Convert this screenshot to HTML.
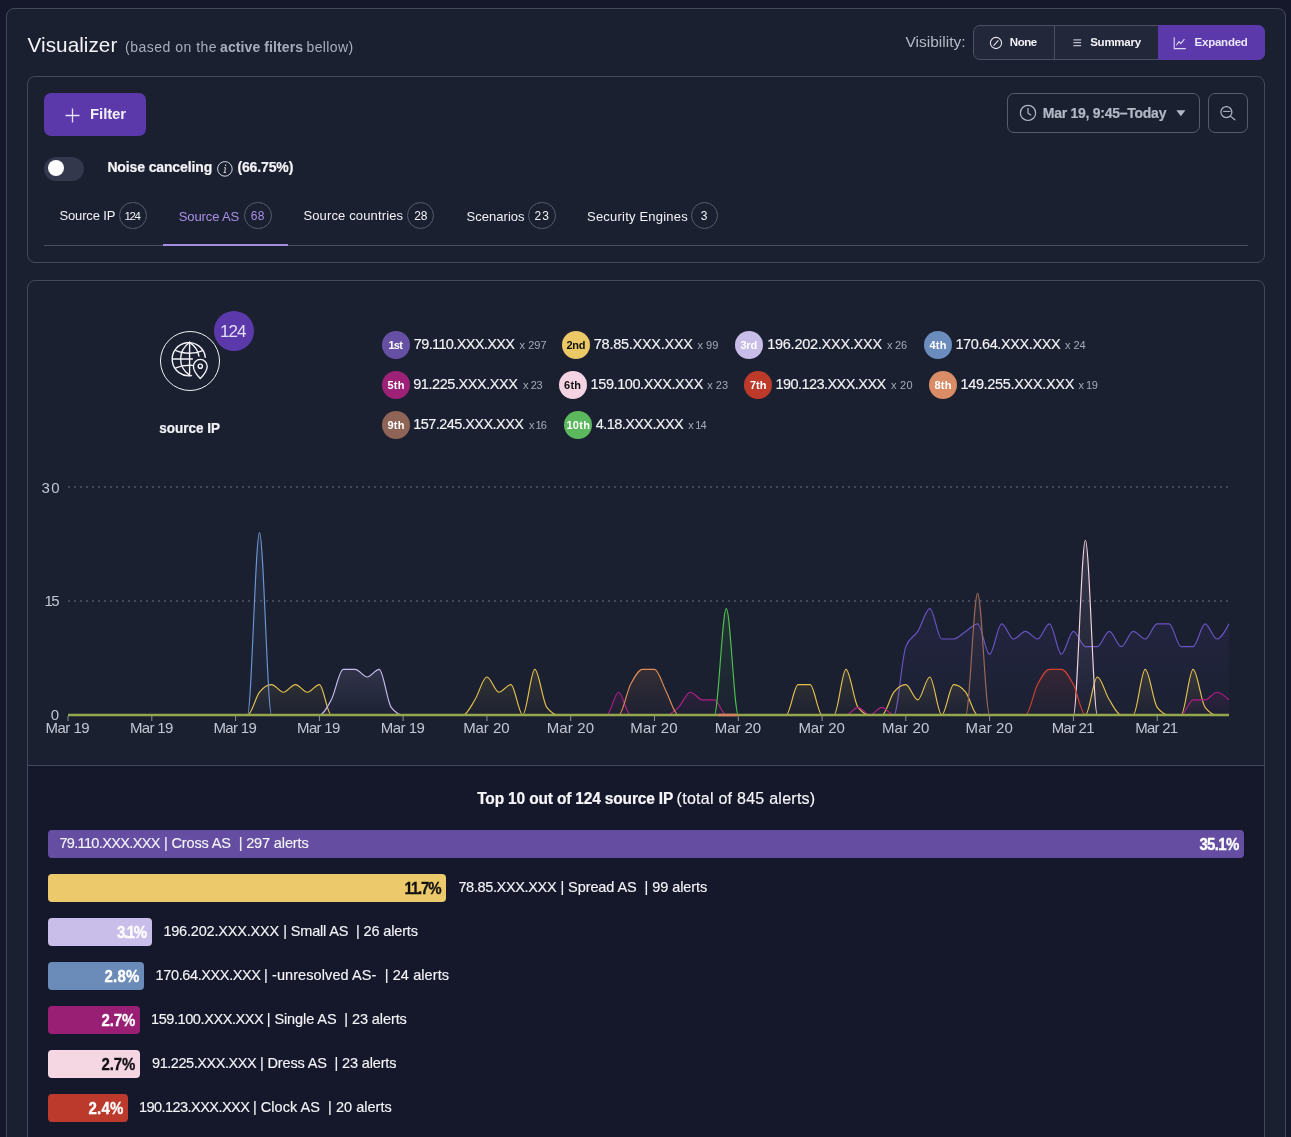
<!DOCTYPE html>
<html lang="en"><head><meta charset="utf-8"><title>Visualizer</title>
<style>

*{box-sizing:border-box;margin:0;padding:0}
html,body{width:1291px;height:1137px;overflow:hidden;background:#15172a;font-family:"Liberation Sans", sans-serif;color:#f1f1f6}
body{position:relative}
#app{position:absolute;left:0;top:0;width:1291px;height:1137px;will-change:transform}
.abs{position:absolute}
.t{position:absolute;white-space:pre;line-height:1;}
.s{-webkit-text-stroke:0.15px currentColor}
.p{transform:scaleY(1.1);-webkit-text-stroke:0.3px currentColor}
.b{transform:scaleY(1.07);-webkit-text-stroke:0.2px currentColor}
.card{position:absolute;border:1px solid #44485c;border-radius:8px;background:#1b2031}
.btn{position:absolute;border:1px solid #565b70;border-radius:7px}
.circ{position:absolute;border-radius:50%}
.bar{position:absolute;left:48px;height:28px;border-radius:4px}

</style></head><body><div id="app">
<main class="card" style="left:6px;top:8px;width:1280px;height:1160px"></main>
<header>
<span class="t" style="left:27.60px;top:35.00px;font-size:20.7px;font-weight:400;color:#f3f3f7;letter-spacing:0.044px">Visualizer</span>
<span class="t" style="left:125.00px;top:40.00px;font-size:14px;font-weight:400;color:#a9adbb;letter-spacing:0.500px">(based on the</span>
<span class="t" style="left:220.00px;top:40.00px;font-size:14px;font-weight:700;color:#a9adbb;letter-spacing:0.100px">active filters</span>
<span class="t" style="left:306.60px;top:40.00px;font-size:14px;font-weight:400;color:#a9adbb;letter-spacing:0.350px">bellow)</span>
<span class="t" style="left:905.40px;top:34.00px;font-size:15.5px;font-weight:400;color:#b5b9c6;letter-spacing:0.020px">Visibility:</span>
<div class="abs" style="left:973px;top:25px;width:292px;height:35px;border:1px solid #4b5064;border-radius:7px;background:#23273a"></div>
<div class="abs" style="left:1054px;top:25px;width:1px;height:35px;background:#4b5064"></div>
<div class="abs" style="left:1158px;top:25px;width:107px;height:35px;background:#5b39ab;border-radius:0 7px 7px 0"></div>
<svg class="abs" style="left:988px;top:35px" width="16" height="16" viewBox="0 0 16 16" fill="none" stroke="#e6e6ee" stroke-width="1.1"><circle cx="8" cy="8" r="5.6"/><path d="M5.9 10.3L10.1 5.7" stroke-linecap="round"/></svg>
<span class="t" style="left:1009.80px;top:37.00px;font-size:11.5px;font-weight:700;color:#f3f3f7;letter-spacing:-0.467px">None</span>
<svg class="abs" style="left:1072px;top:36px" width="11" height="14" viewBox="0 0 11 14" fill="none" stroke="#b9bcc9" stroke-width="1.2"><path d="M1.4 3.8H9.1M1.4 6.7H9.1M1.4 9.6H9.1"/></svg>
<span class="t" style="left:1090.20px;top:37.00px;font-size:11.5px;font-weight:700;color:#f3f3f7;letter-spacing:-0.250px">Summary</span>
<svg class="abs" style="left:1173px;top:36px" width="14" height="14" viewBox="0 0 14 14" fill="none" stroke="#ddd6f3" stroke-width="1.1"><path d="M1.2 1.2V12.6H12.8"/><path d="M3.4 9.2L6 5.6L7.8 7.6L11.4 3.2" stroke-linejoin="round"/></svg>
<span class="t" style="left:1194.60px;top:37.00px;font-size:11.5px;font-weight:700;color:#ebe6f8;letter-spacing:-0.243px">Expanded</span>
</header>
<section class="card" style="left:27px;top:76px;width:1238px;height:187px"></section>
<div class="abs" style="left:44px;top:93px;width:102px;height:43px;background:#5b39ab;border-radius:7px"></div>
<svg class="abs" style="left:64px;top:107px" width="16" height="16" viewBox="0 0 16 16" stroke="#e9e4f7" stroke-width="1.3" fill="none"><path d="M8.5 1.5V15.5M1.5 8.5H15.5"/></svg>
<span class="t" style="left:90.00px;top:106.00px;font-size:15px;font-weight:700;color:#f3f0fb;letter-spacing:-0.100px">Filter</span>
<div class="btn" style="left:1007px;top:93px;width:193px;height:40px"></div>
<svg class="abs" style="left:1019px;top:104px" width="18" height="18" viewBox="0 0 18 18" fill="none" stroke="#b4b8c5" stroke-width="1.2"><circle cx="9" cy="8.9" r="7.6"/><path d="M9 4.4V9.2L11.8 11" stroke-linecap="round" stroke-linejoin="round"/></svg>
<span class="t b" style="left:1042.80px;top:106.00px;font-size:14px;font-weight:700;color:#b4b8c5;letter-spacing:-0.265px;transform-origin:0 12px">Mar 19, 9:45–Today</span>
<svg class="abs" style="left:1176px;top:110px" width="10" height="7" viewBox="0 0 10 7"><path d="M0.4 0.2H9.4L4.9 6.2Z" fill="#b4b8c5"/></svg>
<div class="btn" style="left:1208px;top:93px;width:40px;height:40px"></div>
<svg class="abs" style="left:1218px;top:104px" width="20" height="20" viewBox="0 0 20 20" fill="none" stroke="#b4b8c5" stroke-width="1.2"><circle cx="8.4" cy="8.1" r="5.5"/><path d="M12.4 12.1L16.8 15.8" stroke-linecap="round"/><path d="M5.2 7.4H12.6" stroke-width="1"/></svg>
<div class="abs" style="left:44px;top:157px;width:40px;height:24px;border-radius:12px;background:#34384c"></div>
<div class="circ" style="left:48px;top:160px;width:16px;height:16px;background:#fff"></div>
<span class="t b" style="left:107.40px;top:160.00px;font-size:14px;font-weight:700;color:#f3f3f7;letter-spacing:-0.129px;transform-origin:0 12px">Noise canceling</span>
<svg class="abs" style="left:216px;top:160px" width="18" height="18" viewBox="0 0 18 18" fill="none" stroke="#d5d7e0" stroke-width="1"><circle cx="8.9" cy="8.9" r="7.3"/><path d="M8.2 7.7H9.5L8.7 12.3M7.6 12.4H10" stroke-width="1"/><circle cx="9.6" cy="5.3" r="0.75" fill="#d5d7e0" stroke="none"/></svg>
<span class="t b" style="left:237.40px;top:160.00px;font-size:14px;font-weight:700;color:#f3f3f7;letter-spacing:-0.129px;transform-origin:0 12px">(66.75%)</span>
<nav><div class="abs" style="left:44px;top:245px;width:1204px;height:1px;background:#4a4e62"></div>
<div class="abs" style="left:163px;top:244px;width:125px;height:2px;background:#a48de0"></div>
<span class="t" style="left:59.40px;top:209.00px;font-size:13px;font-weight:400;color:#f1f1f6;letter-spacing:-0.125px">Source IP</span>
<div class="circ" style="left:119.1px;top:201.7px;width:27.6px;height:27.6px;border:1px solid #565b70"></div>
<span class="t" style="left:124.60px;top:211.00px;font-size:11.5px;font-weight:400;color:#f1f1f6;letter-spacing:-1.400px">124</span>
<span class="t" style="left:178.80px;top:210.00px;font-size:13px;font-weight:400;color:#a790e6;letter-spacing:-0.125px">Source AS</span>
<div class="circ" style="left:244.2px;top:201.7px;width:27.6px;height:27.6px;border:1px solid #565b70"></div>
<span class="t" style="left:250.80px;top:210.00px;font-size:12px;font-weight:400;color:#a790e6;letter-spacing:0.200px">68</span>
<span class="t" style="left:303.40px;top:209.00px;font-size:13px;font-weight:400;color:#f1f1f6;letter-spacing:0.140px">Source countries</span>
<div class="circ" style="left:406.8px;top:201.7px;width:27.6px;height:27.6px;border:1px solid #565b70"></div>
<span class="t" style="left:414.20px;top:210.00px;font-size:12px;font-weight:400;color:#f1f1f6;letter-spacing:0.000px">28</span>
<span class="t" style="left:466.60px;top:210.00px;font-size:13px;font-weight:400;color:#f1f1f6;letter-spacing:0.025px">Scenarios</span>
<div class="circ" style="left:528.0px;top:201.7px;width:27.6px;height:27.6px;border:1px solid #565b70"></div>
<span class="t" style="left:534.60px;top:210.00px;font-size:12px;font-weight:400;color:#f1f1f6;letter-spacing:1.000px">23</span>
<span class="t" style="left:587.00px;top:210.00px;font-size:13px;font-weight:400;color:#f1f1f6;letter-spacing:0.213px">Security Engines</span>
<div class="circ" style="left:690.8px;top:201.7px;width:27.6px;height:27.6px;border:1px solid #565b70"></div>
<span class="t" style="left:700.80px;top:210.00px;font-size:12px;font-weight:400;color:#f1f1f6;letter-spacing:0.000px">3</span>
</nav>
<section class="card" style="left:27px;top:280px;width:1238px;height:900px;overflow:hidden"><div class="abs" style="left:0;top:484px;width:1238px;height:500px;background:#15182a;border-top:1px solid #44485c"></div></section>
<div class="circ" style="left:160px;top:331px;width:60px;height:60px;border:1.2px solid #f0f0f5"></div>
<svg class="abs" style="left:170px;top:339px" width="42" height="42" viewBox="0 0 42 42" fill="none" stroke="#f3f3f7" stroke-width="1.4" stroke-linecap="round">
<path d="M21.5 36.6A16.6 16.6 0 1 1 35.3 18.4"/>
<path d="M19.6 3.3V36.4"/>
<path d="M19.6 3.3C13.6 7.8 10.6 13.4 10.6 20C10.6 26.6 13.6 32 19.6 36.4"/>
<path d="M19.6 3.3C25 7 28.2 11.6 28.9 17"/>
<path d="M3 20H22.4"/>
<path d="M5.6 11.4C9.6 13.3 14.2 14.2 19.6 14.2C24.2 14.2 28.6 13.4 32.6 11.6"/>
<path d="M5.8 28.8C9.6 27.2 14 26.3 19.6 26.3C20.6 26.3 21.6 26.3 22.6 26.4"/>
<path d="M30.3 39.6C26.2 35.4 23.4 31.4 23.4 27.3A6.9 6.9 0 0 1 37.2 27.3C37.2 31.4 34.4 35.4 30.3 39.6Z" stroke-linejoin="round"/>
<circle cx="30.3" cy="27.2" r="2.1"/>
</svg>
<div class="circ" style="left:214px;top:311px;width:40px;height:40px;background:#5b39ab"></div>
<span class="t" style="left:220.00px;top:323.00px;font-size:17px;font-weight:400;color:#e4def6;letter-spacing:-1.000px">124</span>
<span class="t b" style="left:159.20px;top:422.00px;font-size:13.5px;font-weight:700;color:#f3f3f7;letter-spacing:0.013px;transform-origin:0 11px">source IP</span>
<ul style="list-style:none">
<li><div class="circ" style="left:382px;top:331px;width:28px;height:28px;background:#6650a4"></div>
<span class="t" style="left:388.50px;top:340.00px;font-size:11px;font-weight:700;color:#fff;letter-spacing:-0.750px">1st</span>
<span class="t s" style="left:413.80px;top:337.00px;font-size:14.5px;font-weight:400;color:#f3f3f7;letter-spacing:-0.631px">79.110.XXX.XXX</span>
<span class="t" style="left:519.60px;top:340.00px;font-size:11px;font-weight:400;color:#a5a9b8;letter-spacing:0.000px">x 297</span>
</li>
<li><div class="circ" style="left:562px;top:331px;width:28px;height:28px;background:#ecc866"></div>
<span class="t" style="left:566.50px;top:340.00px;font-size:11px;font-weight:700;color:#111;letter-spacing:-0.250px">2nd</span>
<span class="t s" style="left:593.80px;top:337.00px;font-size:14.5px;font-weight:400;color:#f3f3f7;letter-spacing:-0.267px">78.85.XXX.XXX</span>
<span class="t" style="left:697.60px;top:340.00px;font-size:11px;font-weight:400;color:#a5a9b8;letter-spacing:-0.033px">x 99</span>
</li>
<li><div class="circ" style="left:735px;top:331px;width:28px;height:28px;background:#c8bce8"></div>
<span class="t" style="left:740.50px;top:340.00px;font-size:11px;font-weight:700;color:#fff;letter-spacing:-0.250px">3rd</span>
<span class="t s" style="left:767.20px;top:337.00px;font-size:14.5px;font-weight:400;color:#f3f3f7;letter-spacing:-0.257px">196.202.XXX.XXX</span>
<span class="t" style="left:887.00px;top:340.00px;font-size:11px;font-weight:400;color:#a5a9b8;letter-spacing:-0.233px">x 26</span>
</li>
<li><div class="circ" style="left:924px;top:331px;width:28px;height:28px;background:#6b8dbd"></div>
<span class="t" style="left:929.50px;top:340.00px;font-size:11px;font-weight:700;color:#fff;letter-spacing:0.250px">4th</span>
<span class="t s" style="left:955.40px;top:337.00px;font-size:14.5px;font-weight:400;color:#f3f3f7;letter-spacing:-0.400px">170.64.XXX.XXX</span>
<span class="t" style="left:1065.00px;top:340.00px;font-size:11px;font-weight:400;color:#a5a9b8;letter-spacing:-0.067px">x 24</span>
</li>
<li><div class="circ" style="left:382px;top:371px;width:28px;height:28px;background:#9c2177"></div>
<span class="t" style="left:387.50px;top:380.00px;font-size:11px;font-weight:700;color:#fff;letter-spacing:0.250px">5th</span>
<span class="t s" style="left:413.20px;top:377.00px;font-size:14.5px;font-weight:400;color:#f3f3f7;letter-spacing:-0.438px">91.225.XXX.XXX</span>
<span class="t" style="left:523.00px;top:380.00px;font-size:11px;font-weight:400;color:#a5a9b8;letter-spacing:-0.400px">x 23</span>
</li>
<li><div class="circ" style="left:558.8px;top:371px;width:28px;height:28px;background:#f4d4e2"></div>
<span class="t" style="left:564.10px;top:380.00px;font-size:11px;font-weight:700;color:#111;letter-spacing:0.250px">6th</span>
<span class="t s" style="left:590.60px;top:377.00px;font-size:14.5px;font-weight:400;color:#f3f3f7;letter-spacing:-0.414px">159.100.XXX.XXX</span>
<span class="t" style="left:707.20px;top:380.00px;font-size:11px;font-weight:400;color:#a5a9b8;letter-spacing:0.033px">x 23</span>
</li>
<li><div class="circ" style="left:744px;top:371px;width:28px;height:28px;background:#bd3a2b"></div>
<span class="t" style="left:750.00px;top:380.00px;font-size:11px;font-weight:700;color:#fff;letter-spacing:0.000px">7th</span>
<span class="t s" style="left:775.40px;top:377.00px;font-size:14.5px;font-weight:400;color:#f3f3f7;letter-spacing:-0.550px">190.123.XXX.XXX</span>
<span class="t" style="left:891.00px;top:380.00px;font-size:11px;font-weight:400;color:#a5a9b8;letter-spacing:0.267px">x 20</span>
</li>
<li><div class="circ" style="left:928.5px;top:371px;width:28px;height:28px;background:#d98c66"></div>
<span class="t" style="left:934.50px;top:380.00px;font-size:11px;font-weight:700;color:#fff;letter-spacing:0.250px">8th</span>
<span class="t s" style="left:960.40px;top:377.00px;font-size:14.5px;font-weight:400;color:#f3f3f7;letter-spacing:-0.321px">149.255.XXX.XXX</span>
<span class="t" style="left:1078.40px;top:380.00px;font-size:11px;font-weight:400;color:#a5a9b8;letter-spacing:-0.433px">x 19</span>
</li>
<li><div class="circ" style="left:382px;top:411px;width:28px;height:28px;background:#8e6456"></div>
<span class="t" style="left:387.50px;top:420.00px;font-size:11px;font-weight:700;color:#fff;letter-spacing:0.250px">9th</span>
<span class="t s" style="left:413.20px;top:417.00px;font-size:14.5px;font-weight:400;color:#f3f3f7;letter-spacing:-0.550px">157.245.XXX.XXX</span>
<span class="t" style="left:529.00px;top:420.00px;font-size:11px;font-weight:400;color:#a5a9b8;letter-spacing:-0.967px">x 16</span>
</li>
<li><div class="circ" style="left:564.2px;top:411px;width:28px;height:28px;background:#5cb85c"></div>
<span class="t" style="left:566.40px;top:420.00px;font-size:11px;font-weight:700;color:#fff;letter-spacing:0.333px">10th</span>
<span class="t s" style="left:595.80px;top:417.00px;font-size:14.5px;font-weight:400;color:#f3f3f7;letter-spacing:-0.582px">4.18.XXX.XXX</span>
<span class="t" style="left:688.20px;top:420.00px;font-size:11px;font-weight:400;color:#a5a9b8;letter-spacing:-0.767px">x 14</span>
</li>
</ul>
<svg class="chart" width="1291" height="300" viewBox="0 470 1291 300" style="position:absolute;left:0;top:470px">
<defs>
<linearGradient id="g0" x1="0" y1="0" x2="0" y2="1"><stop offset="0" stop-color="#6a53c4" stop-opacity="0.1"/><stop offset="1" stop-color="#6a53c4" stop-opacity="0.01"/></linearGradient>
<linearGradient id="g1" x1="0" y1="0" x2="0" y2="1"><stop offset="0" stop-color="#e6c24d" stop-opacity="0.13"/><stop offset="1" stop-color="#e6c24d" stop-opacity="0.01"/></linearGradient>
<linearGradient id="g2" x1="0" y1="0" x2="0" y2="1"><stop offset="0" stop-color="#c7bbee" stop-opacity="0.13"/><stop offset="1" stop-color="#c7bbee" stop-opacity="0.01"/></linearGradient>
<linearGradient id="g3" x1="0" y1="0" x2="0" y2="1"><stop offset="0" stop-color="#6b95cf" stop-opacity="0.13"/><stop offset="1" stop-color="#6b95cf" stop-opacity="0.01"/></linearGradient>
<linearGradient id="g4" x1="0" y1="0" x2="0" y2="1"><stop offset="0" stop-color="#b01f86" stop-opacity="0.13"/><stop offset="1" stop-color="#b01f86" stop-opacity="0.01"/></linearGradient>
<linearGradient id="g5" x1="0" y1="0" x2="0" y2="1"><stop offset="0" stop-color="#f2d3e0" stop-opacity="0.13"/><stop offset="1" stop-color="#f2d3e0" stop-opacity="0.01"/></linearGradient>
<linearGradient id="g6" x1="0" y1="0" x2="0" y2="1"><stop offset="0" stop-color="#d2402c" stop-opacity="0.13"/><stop offset="1" stop-color="#d2402c" stop-opacity="0.01"/></linearGradient>
<linearGradient id="g7" x1="0" y1="0" x2="0" y2="1"><stop offset="0" stop-color="#e08a55" stop-opacity="0.13"/><stop offset="1" stop-color="#e08a55" stop-opacity="0.01"/></linearGradient>
<linearGradient id="g8" x1="0" y1="0" x2="0" y2="1"><stop offset="0" stop-color="#9a6a58" stop-opacity="0.13"/><stop offset="1" stop-color="#9a6a58" stop-opacity="0.01"/></linearGradient>
<linearGradient id="g9" x1="0" y1="0" x2="0" y2="1"><stop offset="0" stop-color="#4fc14f" stop-opacity="0.13"/><stop offset="1" stop-color="#4fc14f" stop-opacity="0.01"/></linearGradient>
</defs>
<line x1="68.0" x2="1229.0" y1="601.0" y2="601.0" stroke="#42475a" stroke-width="2" stroke-dasharray="2 4"/>
<line x1="68.0" x2="1229.0" y1="487.0" y2="487.0" stroke="#42475a" stroke-width="2" stroke-dasharray="2 4"/>
<path d="M893.9,715.0C897.9,715.0 901.8,656.7 905.8,646.6C909.8,636.5 913.8,637.7 917.8,631.4C921.8,625.1 925.8,608.6 929.8,608.6C933.8,608.6 937.8,639.0 941.7,639.0C945.7,639.0 949.7,639.0 953.7,639.0C957.7,639.0 961.7,633.9 965.7,631.4C969.7,628.9 973.7,623.8 977.6,623.8C981.6,623.8 985.6,654.2 989.6,654.2C993.6,654.2 997.6,623.8 1001.6,623.8C1005.6,623.8 1009.6,639.0 1013.6,639.0C1017.5,639.0 1021.5,631.4 1025.5,631.4C1029.5,631.4 1033.5,639.0 1037.5,639.0C1041.5,639.0 1045.5,623.8 1049.5,623.8C1053.5,623.8 1057.4,654.2 1061.4,654.2C1065.4,654.2 1069.4,631.4 1073.4,631.4C1077.4,631.4 1081.4,646.6 1085.4,646.6C1089.4,646.6 1093.4,646.6 1097.3,646.6C1101.3,646.6 1105.3,631.4 1109.3,631.4C1113.3,631.4 1117.3,646.6 1121.3,646.6C1125.3,646.6 1129.3,631.4 1133.2,631.4C1137.2,631.4 1141.2,639.0 1145.2,639.0C1149.2,639.0 1153.2,623.8 1157.2,623.8C1161.2,623.8 1165.2,623.8 1169.2,623.8C1173.1,623.8 1177.1,646.6 1181.1,646.6C1185.1,646.6 1189.1,646.6 1193.1,646.6C1197.1,646.6 1201.1,623.8 1205.1,623.8C1209.1,623.8 1213.0,639.0 1217.0,639.0C1221.0,639.0 1225.0,631.4 1229.0,623.8L1229.0,715.0L893.9,715.0Z" fill="url(#g0)" stroke="none"/>
<path d="M893.9,715.0C897.9,715.0 901.8,656.7 905.8,646.6C909.8,636.5 913.8,637.7 917.8,631.4C921.8,625.1 925.8,608.6 929.8,608.6C933.8,608.6 937.8,639.0 941.7,639.0C945.7,639.0 949.7,639.0 953.7,639.0C957.7,639.0 961.7,633.9 965.7,631.4C969.7,628.9 973.7,623.8 977.6,623.8C981.6,623.8 985.6,654.2 989.6,654.2C993.6,654.2 997.6,623.8 1001.6,623.8C1005.6,623.8 1009.6,639.0 1013.6,639.0C1017.5,639.0 1021.5,631.4 1025.5,631.4C1029.5,631.4 1033.5,639.0 1037.5,639.0C1041.5,639.0 1045.5,623.8 1049.5,623.8C1053.5,623.8 1057.4,654.2 1061.4,654.2C1065.4,654.2 1069.4,631.4 1073.4,631.4C1077.4,631.4 1081.4,646.6 1085.4,646.6C1089.4,646.6 1093.4,646.6 1097.3,646.6C1101.3,646.6 1105.3,631.4 1109.3,631.4C1113.3,631.4 1117.3,646.6 1121.3,646.6C1125.3,646.6 1129.3,631.4 1133.2,631.4C1137.2,631.4 1141.2,639.0 1145.2,639.0C1149.2,639.0 1153.2,623.8 1157.2,623.8C1161.2,623.8 1165.2,623.8 1169.2,623.8C1173.1,623.8 1177.1,646.6 1181.1,646.6C1185.1,646.6 1189.1,646.6 1193.1,646.6C1197.1,646.6 1201.1,623.8 1205.1,623.8C1209.1,623.8 1213.0,639.0 1217.0,639.0C1221.0,639.0 1225.0,631.4 1229.0,623.8" fill="none" stroke="#6a53c4" stroke-width="1.15"/>
<path d="M247.5,715.0C251.5,715.0 255.5,697.3 259.5,692.2C263.5,687.1 267.5,684.6 271.5,684.6C275.5,684.6 279.5,692.2 283.4,692.2C287.4,692.2 291.4,684.6 295.4,684.6C299.4,684.6 303.4,692.2 307.4,692.2C311.4,692.2 315.4,684.6 319.4,684.6C323.3,684.6 327.3,715.0 331.3,715.0L331.3,715.0L247.5,715.0ZM463.0,715.0C467.0,715.0 471.0,706.1 474.9,699.8C478.9,693.5 482.9,677.0 486.9,677.0C490.9,677.0 494.9,692.2 498.9,692.2C502.9,692.2 506.9,684.6 510.9,684.6C514.8,684.6 518.8,715.0 522.8,715.0L522.8,715.0L463.0,715.0ZM522.8,715.0C526.8,715.0 530.8,669.4 534.8,669.4C538.8,669.4 542.8,702.3 546.8,707.4C550.8,712.5 554.7,715.0 558.7,715.0L558.7,715.0L522.8,715.0ZM786.1,715.0C790.1,715.0 794.1,684.6 798.1,684.6C802.1,684.6 806.1,684.6 810.1,684.6C814.1,684.6 818.1,715.0 822.1,715.0L822.1,715.0L786.1,715.0ZM834.0,715.0C838.0,715.0 842.0,669.4 846.0,669.4C850.0,669.4 854.0,702.3 858.0,707.4C861.9,712.5 865.9,715.0 869.9,715.0L869.9,715.0L834.0,715.0ZM881.9,715.0C885.9,715.0 889.9,697.3 893.9,692.2C897.9,687.1 901.8,684.6 905.8,684.6C909.8,684.6 913.8,699.8 917.8,699.8C921.8,699.8 925.8,677.0 929.8,677.0C933.8,677.0 937.8,715.0 941.7,715.0L941.7,715.0L881.9,715.0ZM941.7,715.0C945.7,715.0 949.7,684.6 953.7,684.6C957.7,684.6 961.7,687.1 965.7,692.2C969.7,697.3 973.7,715.0 977.6,715.0L977.6,715.0L941.7,715.0ZM1085.4,715.0C1089.4,715.0 1093.4,677.0 1097.3,677.0C1101.3,677.0 1105.3,693.5 1109.3,699.8C1113.3,706.1 1117.3,715.0 1121.3,715.0L1121.3,715.0L1085.4,715.0ZM1133.2,715.0C1137.2,715.0 1141.2,669.4 1145.2,669.4C1149.2,669.4 1153.2,702.3 1157.2,707.4C1161.2,712.5 1165.2,715.0 1169.2,715.0L1169.2,715.0L1133.2,715.0ZM1181.1,715.0C1185.1,715.0 1189.1,669.4 1193.1,669.4C1197.1,669.4 1201.1,702.3 1205.1,707.4C1209.1,712.5 1213.0,715.0 1217.0,715.0L1217.0,715.0L1181.1,715.0Z" fill="url(#g1)" stroke="none"/>
<path d="M247.5,715.0C251.5,715.0 255.5,697.3 259.5,692.2C263.5,687.1 267.5,684.6 271.5,684.6C275.5,684.6 279.5,692.2 283.4,692.2C287.4,692.2 291.4,684.6 295.4,684.6C299.4,684.6 303.4,692.2 307.4,692.2C311.4,692.2 315.4,684.6 319.4,684.6C323.3,684.6 327.3,715.0 331.3,715.0M463.0,715.0C467.0,715.0 471.0,706.1 474.9,699.8C478.9,693.5 482.9,677.0 486.9,677.0C490.9,677.0 494.9,692.2 498.9,692.2C502.9,692.2 506.9,684.6 510.9,684.6C514.8,684.6 518.8,715.0 522.8,715.0M522.8,715.0C526.8,715.0 530.8,669.4 534.8,669.4C538.8,669.4 542.8,702.3 546.8,707.4C550.8,712.5 554.7,715.0 558.7,715.0M786.1,715.0C790.1,715.0 794.1,684.6 798.1,684.6C802.1,684.6 806.1,684.6 810.1,684.6C814.1,684.6 818.1,715.0 822.1,715.0M834.0,715.0C838.0,715.0 842.0,669.4 846.0,669.4C850.0,669.4 854.0,702.3 858.0,707.4C861.9,712.5 865.9,715.0 869.9,715.0M881.9,715.0C885.9,715.0 889.9,697.3 893.9,692.2C897.9,687.1 901.8,684.6 905.8,684.6C909.8,684.6 913.8,699.8 917.8,699.8C921.8,699.8 925.8,677.0 929.8,677.0C933.8,677.0 937.8,715.0 941.7,715.0M941.7,715.0C945.7,715.0 949.7,684.6 953.7,684.6C957.7,684.6 961.7,687.1 965.7,692.2C969.7,697.3 973.7,715.0 977.6,715.0M1085.4,715.0C1089.4,715.0 1093.4,677.0 1097.3,677.0C1101.3,677.0 1105.3,693.5 1109.3,699.8C1113.3,706.1 1117.3,715.0 1121.3,715.0M1133.2,715.0C1137.2,715.0 1141.2,669.4 1145.2,669.4C1149.2,669.4 1153.2,702.3 1157.2,707.4C1161.2,712.5 1165.2,715.0 1169.2,715.0M1181.1,715.0C1185.1,715.0 1189.1,669.4 1193.1,669.4C1197.1,669.4 1201.1,702.3 1205.1,707.4C1209.1,712.5 1213.0,715.0 1217.0,715.0" fill="none" stroke="#e6c24d" stroke-width="1.15"/>
<path d="M319.4,715.0C323.3,715.0 327.3,707.4 331.3,699.8C335.3,692.2 339.3,669.4 343.3,669.4C347.3,669.4 351.3,669.4 355.3,669.4C359.2,669.4 363.2,677.0 367.2,677.0C371.2,677.0 375.2,669.4 379.2,669.4C383.2,669.4 387.2,702.3 391.2,707.4C395.2,712.5 399.1,715.0 403.1,715.0L403.1,715.0L319.4,715.0Z" fill="url(#g2)" stroke="none"/>
<path d="M319.4,715.0C323.3,715.0 327.3,707.4 331.3,699.8C335.3,692.2 339.3,669.4 343.3,669.4C347.3,669.4 351.3,669.4 355.3,669.4C359.2,669.4 363.2,677.0 367.2,677.0C371.2,677.0 375.2,669.4 379.2,669.4C383.2,669.4 387.2,702.3 391.2,707.4C395.2,712.5 399.1,715.0 403.1,715.0" fill="none" stroke="#c7bbee" stroke-width="1.15"/>
<path d="M247.5,715.0C251.5,715.0 255.5,532.6 259.5,532.6C263.5,532.6 267.5,715.0 271.5,715.0L271.5,715.0L247.5,715.0Z" fill="url(#g3)" stroke="none"/>
<path d="M247.5,715.0C251.5,715.0 255.5,532.6 259.5,532.6C263.5,532.6 267.5,715.0 271.5,715.0" fill="none" stroke="#6b95cf" stroke-width="1.15"/>
<path d="M606.6,715.0C610.6,715.0 614.6,692.2 618.6,692.2C622.6,692.2 626.6,715.0 630.5,715.0L630.5,715.0L606.6,715.0ZM666.5,715.0C670.4,715.0 674.4,711.2 678.4,707.4C682.4,703.6 686.4,692.2 690.4,692.2C694.4,692.2 698.4,699.8 702.4,699.8C706.4,699.8 710.3,699.8 714.3,699.8C718.3,699.8 722.3,715.0 726.3,715.0L726.3,715.0L666.5,715.0ZM846.0,715.0C850.0,715.0 854.0,707.4 858.0,707.4C861.9,707.4 865.9,715.0 869.9,715.0L869.9,715.0L846.0,715.0ZM869.9,715.0C873.9,715.0 877.9,707.4 881.9,707.4C885.9,707.4 889.9,715.0 893.9,715.0L893.9,715.0L869.9,715.0ZM1181.1,715.0C1185.1,715.0 1189.1,699.8 1193.1,699.8C1197.1,699.8 1201.1,699.8 1205.1,699.8C1209.1,699.8 1213.0,692.2 1217.0,692.2C1221.0,692.2 1225.0,696.0 1229.0,699.8L1229.0,715.0L1181.1,715.0Z" fill="url(#g4)" stroke="none"/>
<path d="M606.6,715.0C610.6,715.0 614.6,692.2 618.6,692.2C622.6,692.2 626.6,715.0 630.5,715.0M666.5,715.0C670.4,715.0 674.4,711.2 678.4,707.4C682.4,703.6 686.4,692.2 690.4,692.2C694.4,692.2 698.4,699.8 702.4,699.8C706.4,699.8 710.3,699.8 714.3,699.8C718.3,699.8 722.3,715.0 726.3,715.0M846.0,715.0C850.0,715.0 854.0,707.4 858.0,707.4C861.9,707.4 865.9,715.0 869.9,715.0M869.9,715.0C873.9,715.0 877.9,707.4 881.9,707.4C885.9,707.4 889.9,715.0 893.9,715.0M1181.1,715.0C1185.1,715.0 1189.1,699.8 1193.1,699.8C1197.1,699.8 1201.1,699.8 1205.1,699.8C1209.1,699.8 1213.0,692.2 1217.0,692.2C1221.0,692.2 1225.0,696.0 1229.0,699.8" fill="none" stroke="#b01f86" stroke-width="1.15"/>
<path d="M1073.4,715.0C1077.4,715.0 1081.4,540.2 1085.4,540.2C1089.4,540.2 1093.4,715.0 1097.3,715.0L1097.3,715.0L1073.4,715.0Z" fill="url(#g5)" stroke="none"/>
<path d="M1073.4,715.0C1077.4,715.0 1081.4,540.2 1085.4,540.2C1089.4,540.2 1093.4,715.0 1097.3,715.0" fill="none" stroke="#f2d3e0" stroke-width="1.15"/>
<path d="M1025.5,715.0C1029.5,715.0 1033.5,692.2 1037.5,684.6C1041.5,677.0 1045.5,669.4 1049.5,669.4C1053.5,669.4 1057.4,669.4 1061.4,669.4C1065.4,669.4 1069.4,677.0 1073.4,684.6C1077.4,692.2 1081.4,715.0 1085.4,715.0L1085.4,715.0L1025.5,715.0Z" fill="url(#g6)" stroke="none"/>
<path d="M1025.5,715.0C1029.5,715.0 1033.5,692.2 1037.5,684.6C1041.5,677.0 1045.5,669.4 1049.5,669.4C1053.5,669.4 1057.4,669.4 1061.4,669.4C1065.4,669.4 1069.4,677.0 1073.4,684.6C1077.4,692.2 1081.4,715.0 1085.4,715.0" fill="none" stroke="#d2402c" stroke-width="1.15"/>
<path d="M618.6,715.0C622.6,715.0 626.6,692.2 630.5,684.6C634.5,677.0 638.5,669.4 642.5,669.4C646.5,669.4 650.5,669.4 654.5,669.4C658.5,669.4 662.5,684.6 666.5,692.2C670.4,699.8 674.4,715.0 678.4,715.0L678.4,715.0L618.6,715.0Z" fill="url(#g7)" stroke="none"/>
<path d="M618.6,715.0C622.6,715.0 626.6,692.2 630.5,684.6C634.5,677.0 638.5,669.4 642.5,669.4C646.5,669.4 650.5,669.4 654.5,669.4C658.5,669.4 662.5,684.6 666.5,692.2C670.4,699.8 674.4,715.0 678.4,715.0" fill="none" stroke="#e08a55" stroke-width="1.15"/>
<path d="M965.7,715.0C969.7,715.0 973.7,593.4 977.6,593.4C981.6,593.4 985.6,715.0 989.6,715.0L989.6,715.0L965.7,715.0Z" fill="url(#g8)" stroke="none"/>
<path d="M965.7,715.0C969.7,715.0 973.7,593.4 977.6,593.4C981.6,593.4 985.6,715.0 989.6,715.0" fill="none" stroke="#9a6a58" stroke-width="1.15"/>
<path d="M714.3,715.0C718.3,715.0 722.3,608.6 726.3,608.6C730.3,608.6 734.3,715.0 738.3,715.0L738.3,715.0L714.3,715.0Z" fill="url(#g9)" stroke="none"/>
<path d="M714.3,715.0C718.3,715.0 722.3,608.6 726.3,608.6C730.3,608.6 734.3,715.0 738.3,715.0" fill="none" stroke="#4fc14f" stroke-width="1.15"/>
<line x1="68.0" x2="1229.0" y1="715.0" y2="715.0" stroke="#95a64c" stroke-width="2.4"/>
<line x1="718.3" x2="737.3" y1="715.0" y2="715.0" stroke="#dd8060" stroke-width="2.4"/>
<line x1="68.0" x2="68.0" y1="716.0" y2="721.0" stroke="#8b8fa0" stroke-width="1"/>
<line x1="151.8" x2="151.8" y1="716.0" y2="721.0" stroke="#8b8fa0" stroke-width="1"/>
<line x1="235.6" x2="235.6" y1="716.0" y2="721.0" stroke="#8b8fa0" stroke-width="1"/>
<line x1="319.4" x2="319.4" y1="716.0" y2="721.0" stroke="#8b8fa0" stroke-width="1"/>
<line x1="403.1" x2="403.1" y1="716.0" y2="721.0" stroke="#8b8fa0" stroke-width="1"/>
<line x1="486.9" x2="486.9" y1="716.0" y2="721.0" stroke="#8b8fa0" stroke-width="1"/>
<line x1="570.7" x2="570.7" y1="716.0" y2="721.0" stroke="#8b8fa0" stroke-width="1"/>
<line x1="654.5" x2="654.5" y1="716.0" y2="721.0" stroke="#8b8fa0" stroke-width="1"/>
<line x1="738.3" x2="738.3" y1="716.0" y2="721.0" stroke="#8b8fa0" stroke-width="1"/>
<line x1="822.1" x2="822.1" y1="716.0" y2="721.0" stroke="#8b8fa0" stroke-width="1"/>
<line x1="905.8" x2="905.8" y1="716.0" y2="721.0" stroke="#8b8fa0" stroke-width="1"/>
<line x1="989.6" x2="989.6" y1="716.0" y2="721.0" stroke="#8b8fa0" stroke-width="1"/>
<line x1="1073.4" x2="1073.4" y1="716.0" y2="721.0" stroke="#8b8fa0" stroke-width="1"/>
<line x1="1157.2" x2="1157.2" y1="716.0" y2="721.0" stroke="#8b8fa0" stroke-width="1"/>
</svg>
<span class="t" style="left:50.80px;top:707.00px;font-size:15px;font-weight:400;color:#c3c6d2;letter-spacing:0.000px">0</span>
<span class="t" style="left:44.40px;top:593.00px;font-size:15px;font-weight:400;color:#c3c6d2;letter-spacing:-1.500px">15</span>
<span class="t" style="left:41.40px;top:480.00px;font-size:15px;font-weight:400;color:#c3c6d2;letter-spacing:1.500px">30</span>
<span class="t" style="left:45.40px;top:720.00px;font-size:15px;font-weight:400;color:#c3c6d2;letter-spacing:-0.480px">Mar 19</span>
<span class="t" style="left:129.97px;top:720.00px;font-size:15px;font-weight:400;color:#c3c6d2;letter-spacing:-0.680px">Mar 19</span>
<span class="t" style="left:213.53px;top:720.00px;font-size:15px;font-weight:400;color:#c3c6d2;letter-spacing:-0.680px">Mar 19</span>
<span class="t" style="left:297.10px;top:720.00px;font-size:15px;font-weight:400;color:#c3c6d2;letter-spacing:-0.680px">Mar 19</span>
<span class="t" style="left:380.67px;top:720.00px;font-size:15px;font-weight:400;color:#c3c6d2;letter-spacing:-0.480px">Mar 19</span>
<span class="t" style="left:463.14px;top:720.00px;font-size:15px;font-weight:400;color:#c3c6d2;letter-spacing:-0.060px">Mar 20</span>
<span class="t" style="left:546.70px;top:720.00px;font-size:15px;font-weight:400;color:#c3c6d2;letter-spacing:0.140px">Mar 20</span>
<span class="t" style="left:630.27px;top:720.00px;font-size:15px;font-weight:400;color:#c3c6d2;letter-spacing:0.140px">Mar 20</span>
<span class="t" style="left:714.84px;top:720.00px;font-size:15px;font-weight:400;color:#c3c6d2;letter-spacing:-0.060px">Mar 20</span>
<span class="t" style="left:798.40px;top:720.00px;font-size:15px;font-weight:400;color:#c3c6d2;letter-spacing:-0.060px">Mar 20</span>
<span class="t" style="left:881.97px;top:720.00px;font-size:15px;font-weight:400;color:#c3c6d2;letter-spacing:0.140px">Mar 20</span>
<span class="t" style="left:965.54px;top:720.00px;font-size:15px;font-weight:400;color:#c3c6d2;letter-spacing:0.140px">Mar 20</span>
<span class="t" style="left:1051.80px;top:720.00px;font-size:15px;font-weight:400;color:#c3c6d2;letter-spacing:-0.800px">Mar 21</span>
<span class="t" style="left:1135.37px;top:720.00px;font-size:15px;font-weight:400;color:#c3c6d2;letter-spacing:-0.800px">Mar 21</span>
<span class="t b" style="left:477.20px;top:791.00px;font-size:15.5px;font-weight:700;color:#f6f6fa;letter-spacing:-0.165px;transform-origin:0 13px">Top 10 out of 124 source IP</span>
<span class="t s" style="left:676.60px;top:791.00px;font-size:16px;font-weight:400;color:#f6f6fa;letter-spacing:0.260px">(total of 845 alerts)</span>
<ol style="list-style:none">
<li><div class="bar" style="top:830px;width:1196px;background:#654ea1"></div>
<span class="t p" style="left:1199.40px;top:837.00px;font-size:15px;font-weight:700;color:#fff;letter-spacing:-0.675px;transform-origin:0 13px">35.1%</span>
<span class="t s" style="left:59.40px;top:836.00px;font-size:14.5px;font-weight:400;color:#f3f3f7;letter-spacing:-0.646px">79.110.XXX.XXX</span>
<span class="t s" style="left:164.00px;top:836.00px;font-size:14.5px;font-weight:400;color:#f3f3f7;letter-spacing:-0.135px">| Cross AS  | 297 alerts</span>
</li>
<li><div class="bar" style="top:874px;width:398px;background:#ecc96a"></div>
<span class="t p" style="left:404.60px;top:881.00px;font-size:15px;font-weight:700;color:#111;letter-spacing:-1.200px;transform-origin:0 13px">11.7%</span>
<span class="t s" style="left:458.40px;top:880.00px;font-size:14.5px;font-weight:400;color:#f3f3f7;letter-spacing:-0.350px">78.85.XXX.XXX</span>
<span class="t s" style="left:560.40px;top:880.00px;font-size:14.5px;font-weight:400;color:#f3f3f7;letter-spacing:-0.074px">| Spread AS  | 99 alerts</span>
</li>
<li><div class="bar" style="top:918px;width:104px;background:#c9bee9"></div>
<span class="t p" style="left:117.00px;top:925.00px;font-size:15px;font-weight:700;color:#fff;letter-spacing:-1.333px;transform-origin:0 13px">3.1%</span>
<span class="t s" style="left:163.40px;top:924.00px;font-size:14.5px;font-weight:400;color:#f3f3f7;letter-spacing:-0.200px">196.202.XXX.XXX</span>
<span class="t s" style="left:283.20px;top:924.00px;font-size:14.5px;font-weight:400;color:#f3f3f7;letter-spacing:-0.150px">| Small AS  | 26 alerts</span>
</li>
<li><div class="bar" style="top:962px;width:96px;background:#6b8cb9"></div>
<span class="t p" style="left:104.40px;top:969.00px;font-size:15px;font-weight:700;color:#fff;letter-spacing:0.267px;transform-origin:0 13px">2.8%</span>
<span class="t s" style="left:155.60px;top:968.00px;font-size:14.5px;font-weight:400;color:#f3f3f7;letter-spacing:-0.385px">170.64.XXX.XXX</span>
<span class="t s" style="left:264.00px;top:968.00px;font-size:14.5px;font-weight:400;color:#f3f3f7;letter-spacing:0.090px">| -unresolved AS-  | 24 alerts</span>
</li>
<li><div class="bar" style="top:1006px;width:92px;background:#981f74"></div>
<span class="t p" style="left:101.40px;top:1013.00px;font-size:15px;font-weight:700;color:#fff;letter-spacing:-0.067px;transform-origin:0 13px">2.7%</span>
<span class="t s" style="left:151.00px;top:1012.00px;font-size:14.5px;font-weight:400;color:#f3f3f7;letter-spacing:-0.414px">159.100.XXX.XXX</span>
<span class="t s" style="left:266.80px;top:1012.00px;font-size:14.5px;font-weight:400;color:#f3f3f7;letter-spacing:-0.091px">| Single AS  | 23 alerts</span>
</li>
<li><div class="bar" style="top:1050px;width:92px;background:#f5d6e3"></div>
<span class="t p" style="left:101.40px;top:1057.00px;font-size:15px;font-weight:700;color:#111;letter-spacing:-0.067px;transform-origin:0 13px">2.7%</span>
<span class="t s" style="left:152.00px;top:1056.00px;font-size:14.5px;font-weight:400;color:#f3f3f7;letter-spacing:-0.438px">91.225.XXX.XXX</span>
<span class="t s" style="left:260.00px;top:1056.00px;font-size:14.5px;font-weight:400;color:#f3f3f7;letter-spacing:-0.145px">| Dress AS  | 23 alerts</span>
</li>
<li><div class="bar" style="top:1094px;width:80px;background:#bb3a2c"></div>
<span class="t p" style="left:88.40px;top:1101.00px;font-size:15px;font-weight:700;color:#fff;letter-spacing:0.267px;transform-origin:0 13px">2.4%</span>
<span class="t s" style="left:139.00px;top:1100.00px;font-size:14.5px;font-weight:400;color:#f3f3f7;letter-spacing:-0.550px">190.123.XXX.XXX</span>
<span class="t s" style="left:253.00px;top:1100.00px;font-size:14.5px;font-weight:400;color:#f3f3f7;letter-spacing:0.032px">| Clock AS  | 20 alerts</span>
</li>
<li><div class="bar" style="top:1138px;width:76px;background:#d98c66"></div>
<span class="t p" style="left:85.40px;top:1145.00px;font-size:15px;font-weight:700;color:#fff;letter-spacing:-0.067px;transform-origin:0 13px">2.2%</span>
<span class="t s" style="left:135.00px;top:1144.00px;font-size:14.5px;font-weight:400;color:#f3f3f7;letter-spacing:-0.321px">149.255.XXX.XXX</span>
<span class="t s" style="left:252.40px;top:1144.00px;font-size:14.5px;font-weight:400;color:#f3f3f7;letter-spacing:-0.032px">| Trend AS  | 19 alerts</span>
</li>
</ol>
</div></body></html>
